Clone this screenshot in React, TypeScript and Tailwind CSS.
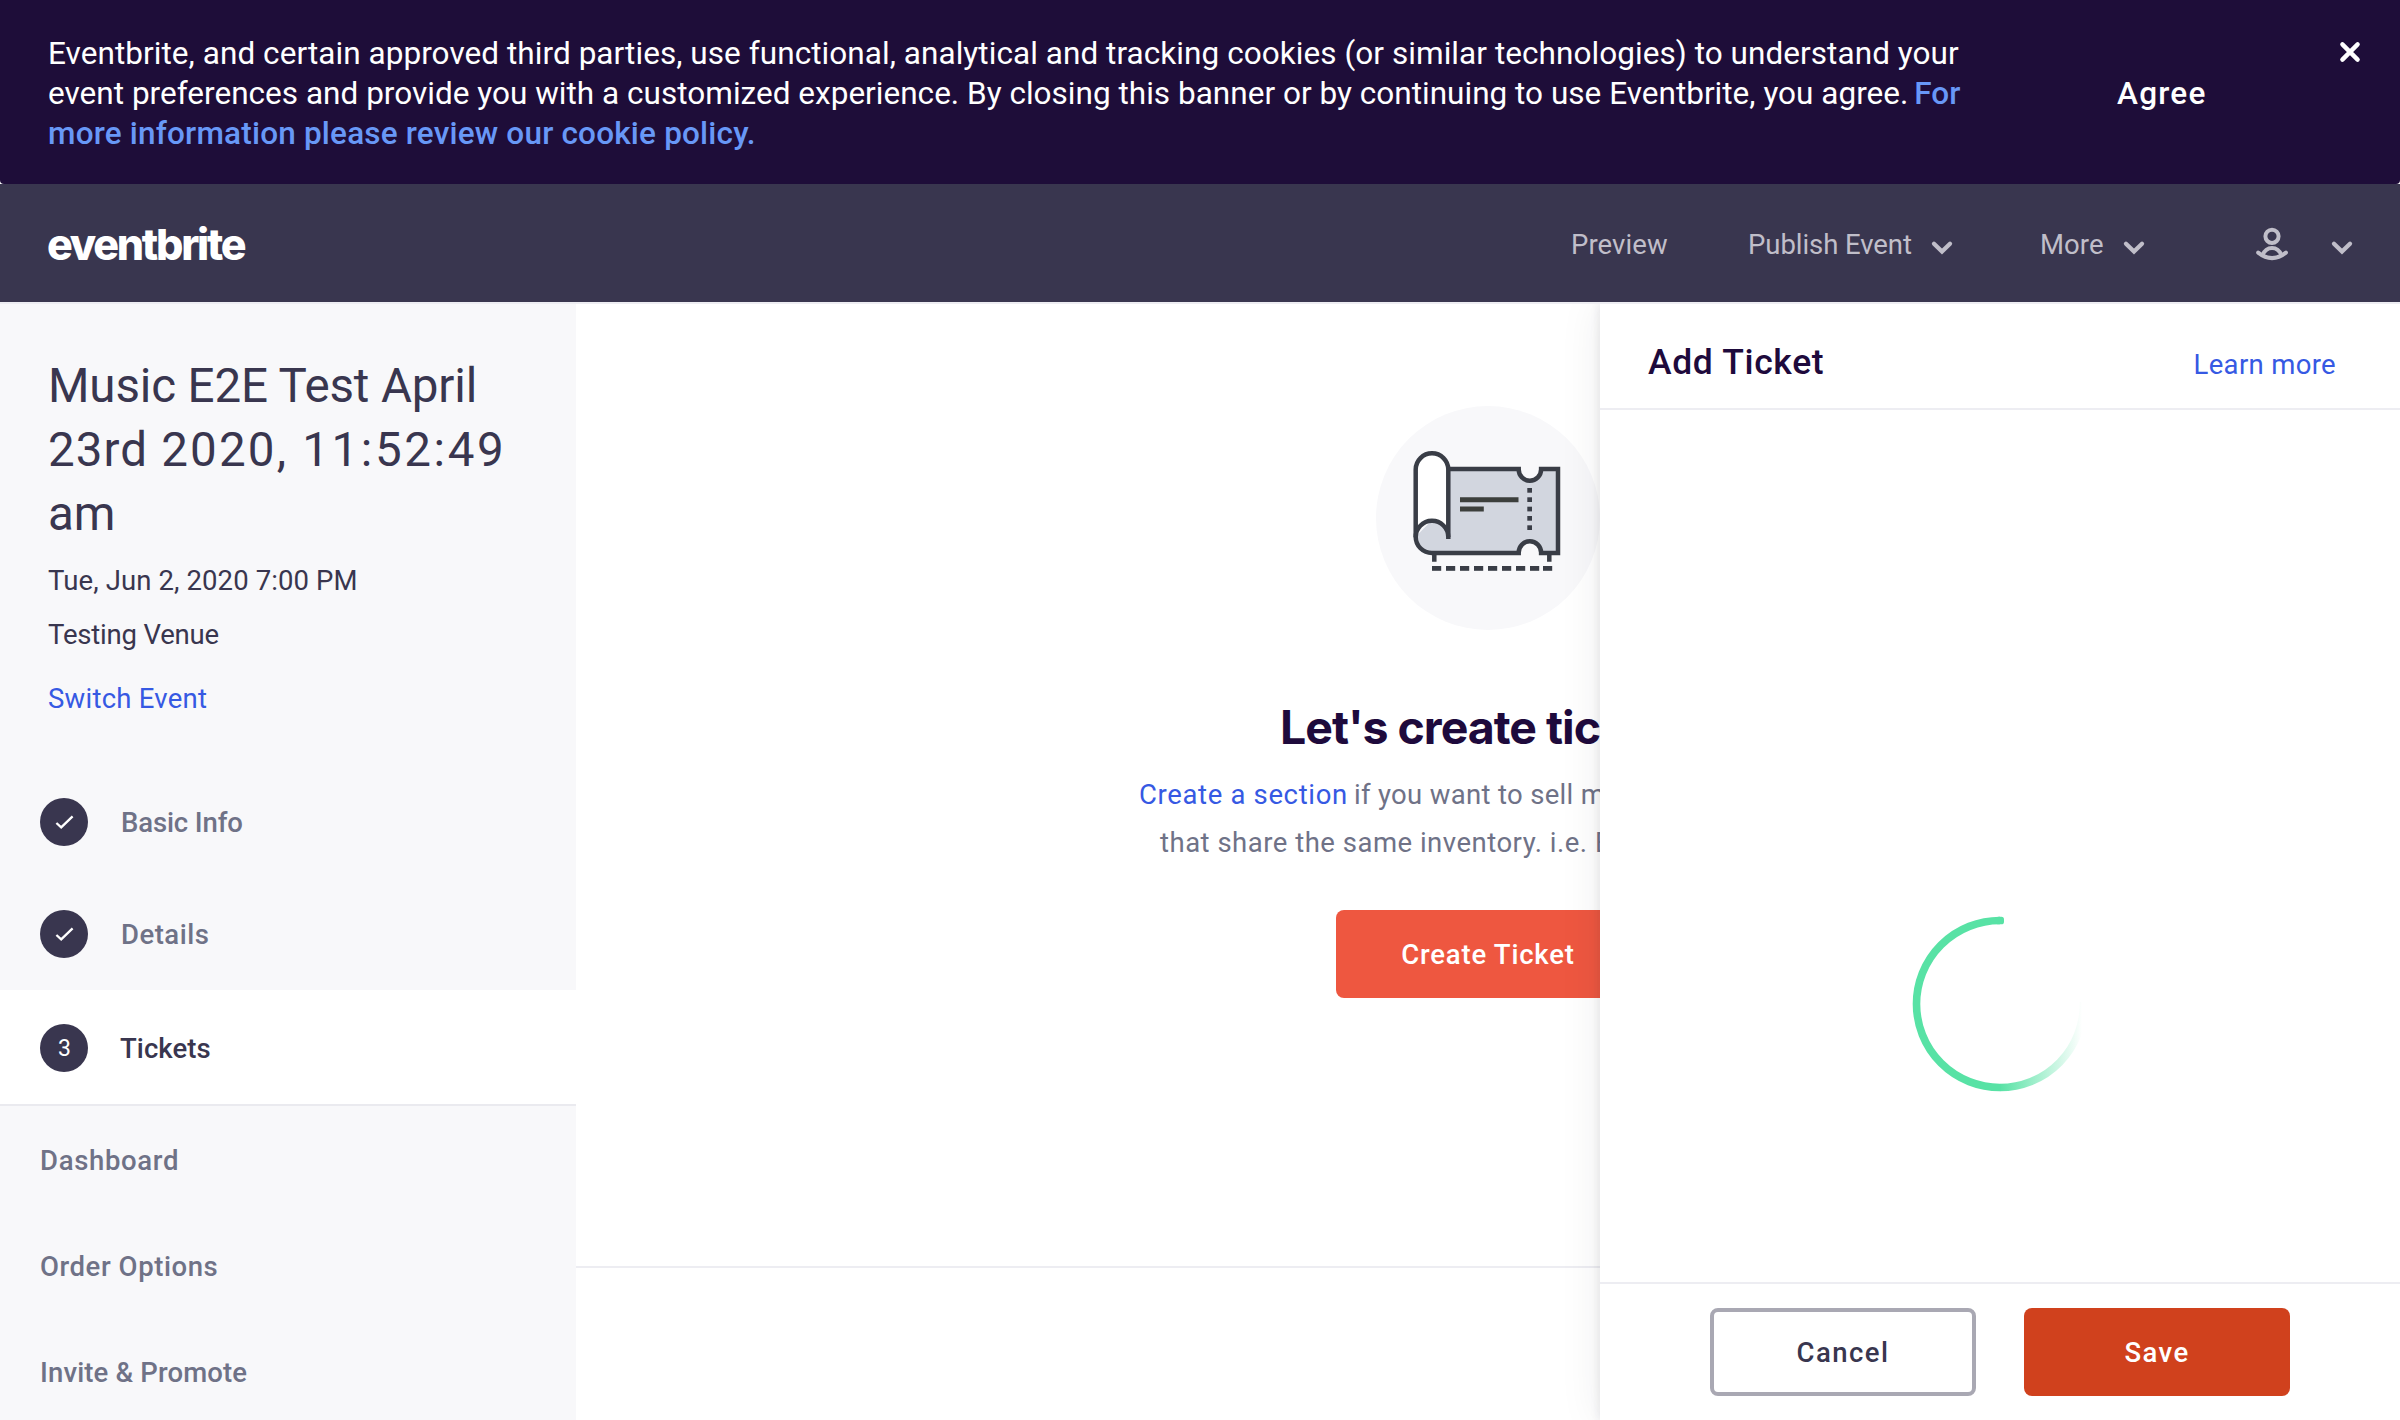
import React from "react";

function Chevron() {
  return (
    <svg className="h-4 w-6 shrink-0" viewBox="0 0 24 16" fill="none" stroke="#c0bec9" strokeWidth="4.3">
      <path d="M4 3.8 12 11.5 20 3.8" strokeLinecap="round" />
    </svg>
  );
}

function UserIcon() {
  return (
    <svg className="size-9 shrink-0" viewBox="0 0 36 36" fill="none" stroke="#c0bec9" strokeWidth="4">
      <circle cx="18" cy="10.3" r="6.6" />
      <path d="M4.2 26.6Q18 37.6 31.9 26.6" strokeLinecap="round" />
      <path d="M8.4 29.5C10.4 24.6 14 22.1 18 22.1S25.6 24.6 27.6 29.5" />
    </svg>
  );
}

function CloseIcon() {
  return (
    <svg className="size-6" viewBox="0 0 24 24" stroke="#fff" strokeWidth="4.4" strokeLinecap="round">
      <path d="M4.4 4.4 19.6 19.6M19.6 4.4 4.4 19.6" />
    </svg>
  );
}

const stubDashes = [56, 70, 84, 98, 112, 126, 140, 154, 167];
const perforation = [82, 91.3, 100.7, 110, 119.3];

function TicketArt() {
  return (
    <svg className="mx-auto block size-56" viewBox="0 0 224 224" fill="none" stroke="#393d46" strokeWidth="4.5">
      <circle cx="112" cy="112" r="112" fill="#f8f8fa" stroke="none" />
      <path
        fill="#d2d6df"
        d="M72 63H142.7V63.5A11.2 11.2 0 0 0 165.1 63.5V63H182V147H165.1V146.5A11.2 11.2 0 0 0 142.7 146.5V147H56A16.3 16.3 0 0 1 39.7 130.7L60 110Z"
        stroke="none"
      />
      <path fill="#fff" stroke="none" d="M39.7 131V63.6A16.3 16.3 0 0 1 72.3 63.6V131A16.3 16.3 0 0 0 39.7 131Z" />
      <path d="M72.3 63H142.7V63.5A11.2 11.2 0 0 0 165.1 63.5V63H182V147H165.1V146.5A11.2 11.2 0 0 0 142.7 146.5V147H56A16.3 16.3 0 0 1 39.7 130.7V63.6A16.3 16.3 0 0 1 72.3 63.6V133" />
      <path d="M39.7 131.3A16.3 16.3 0 0 1 72.3 131" />
      <path stroke="#3c3f3c" strokeWidth="5" d="M84 93.8H142.5M84 103.1H107.8" />
      <path d="M58.3 149V155.7M173.3 149V155.7" />
      <g fill="#393d46" stroke="none">
        {perforation.map((y) => (
          <rect key={y} x="151.3" y={y} width="4.7" height="4.7" />
        ))}
        {stubDashes.map((x) => (
          <rect key={x} x={x} y="160" width="9.2" height="4.8" />
        ))}
      </g>
    </svg>
  );
}

function Spinner() {
  return (
    <svg className="size-[180px]" viewBox="0 0 180 180" fill="none" strokeWidth="7.6">
      <defs>
        <linearGradient id="fade" gradientUnits="userSpaceOnUse" x1="90" y1="0" x2="172" y2="0">
          <stop offset="0" stopColor="#58e2a5" />
          <stop offset="1" stopColor="#58e2a5" stopOpacity="0" />
        </linearGradient>
      </defs>
      <path d="M90 173.5A83.5 83.5 0 0 0 173.5 88" stroke="url(#fade)" />
      <path d="M90.2 173.5H90A83.5 83.5 0 0 1 90 6.5" stroke="#58e2a5" />
      <rect x="86" y="2.7" width="8" height="7.6" rx="2.6" fill="#58e2a5" />
    </svg>
  );
}

function CheckBadge() {
  return (
    <svg className="size-12 shrink-0 rounded-full bg-[#39364f]" viewBox="0 0 48 48" fill="none" stroke="#fff" strokeWidth="2.3">
      <path d="M16.4 25 21.2 29.4 32.6 18.4" />
    </svg>
  );
}

function Banner() {
  return (
    <div className="h-[184px] bg-white">
      <div className="flex h-full rounded-b-[4px] bg-[#1e0d39]">
        <p className="w-[2069px] pt-[34px] pl-12 text-[31.5px] leading-10 whitespace-nowrap text-white">
          <span className="tracking-[0.06px]">
            Eventbrite, and certain approved third parties, use functional, analytical and tracking cookies (or similar technologies) to understand your
          </span>
          <br />
          <span className="tracking-[0.02px]">
            event preferences and provide you with a customized experience. By closing this banner or by continuing to use Eventbrite, you agree.
          </span>
          <a className="font-medium text-[#6898f7]">
            <span className="pl-[6px]">For</span>
            <br />
            <span className="tracking-[0.19px]">more information please review our cookie policy.</span>
          </a>
        </p>
        <button className="w-[269px] pt-[4px] pl-12 text-left text-[31.5px] leading-10 font-medium tracking-[1.26px] text-white">Agree</button>
        <div className="pt-10">
          <CloseIcon />
        </div>
      </div>
    </div>
  );
}

function NavBar() {
  return (
    <header className="flex h-[120px] items-center justify-between border-b-2 border-[#ededf2] bg-[#39364f] pr-[46px] pl-[47px] text-[27.5px] text-[#c0bec9]">
      <span className="pt-[2px] font-['Inter',sans-serif] text-[43px] leading-none font-extrabold tracking-[-2.3px] text-white">eventbrite</span>
      <nav className="flex items-center leading-8">
        <span className="w-[177px] pt-[3px] tracking-[0.1px]">Preview</span>
        <span className="w-[182px] pt-[3px] tracking-[-0.06px]">Publish Event</span>
        <span className="mr-[86px] pt-[10px]">
          <Chevron />
        </span>
        <span className="w-[82px] pt-[3px] tracking-[0.08px]">More</span>
        <span className="mr-[108px] pt-[10px]">
          <Chevron />
        </span>
        <span className="mr-10 pt-px">
          <UserIcon />
        </span>
        <span className="pt-[10px]">
          <Chevron />
        </span>
      </nav>
    </header>
  );
}

function Sidebar() {
  return (
    <aside className="w-[576px] shrink-0 bg-[#f8f8fa] pt-[50px] text-[27.5px] leading-[54px] text-[#39364f]">
      <div className="pl-12">
        <h1 className="text-[47.5px] leading-[64px]">
          <span className="tracking-[-0.14px]">Music E2E Test April</span>
          <br />
          <span className="tracking-[1.1px]">23rd </span>
          <span className="tracking-[2.2px]">2020, </span>
          <span className="tracking-[2.6px]">11:52:49</span>
          <br />
          am
        </h1>
        <p className="mt-2 tracking-[0.11px]">Tue, Jun 2, 2020 7:00 PM</p>
        <p className="tracking-[-0.19px]">Testing Venue</p>
        <a className="mt-[10px] block tracking-[0.25px] text-[#3659e3]">Switch Event</a>
      </div>
      <nav className="mt-10 font-medium text-[#6f7287]">
        <div className="flex h-28 items-center gap-8 pl-10">
          <CheckBadge />
          <span className="pt-[2px] pl-px tracking-[-0.12px]">Basic Info</span>
        </div>
        <div className="flex h-28 items-center gap-8 pl-10">
          <CheckBadge />
          <span className="pt-[2px] pl-px tracking-[0.5px]">Details</span>
        </div>
        <div className="flex h-[116px] items-center gap-8 border-b-2 border-[#eaeaef] bg-white pt-[2px] pl-10 text-[#39364f]">
          <span className="flex size-12 items-center justify-center rounded-full bg-[#39364f] pt-px pl-px text-[23px] font-normal text-white">3</span>
          <span className="pt-[2px] tracking-[0.07px]">Tickets</span>
        </div>
        <div className="pt-[2px] pl-10 leading-[106px]">
          <div className="tracking-[0.68px]">Dashboard</div>
          <div className="tracking-[0.57px]">Order Options</div>
          <div className="tracking-[0.14px]">Invite &amp; Promote</div>
        </div>
      </nav>
    </aside>
  );
}

function EmptyState() {
  return (
    <main className="flex-1">
      <div className="h-[964px] border-b-2 border-[#ededf2] pt-[102px]">
        <TicketArt />
        <div className="mx-auto mt-[65px] w-[698px] whitespace-nowrap">
          <h2 className="pl-[141px] font-['Inter',sans-serif] text-[46.5px] leading-[64px] font-bold tracking-[-1px] text-[#1e0a3c]">
            Let's create tickets
          </h2>
          <p className="mt-3 text-[27.5px] leading-[48px] text-[#6f7287]">
            <a className="tracking-[0.65px] text-[#3659e3]">Create a section</a>
            <span className="-ml-px tracking-[0.32px]"> if you want to sell multiple ticket types</span>
            <br />
            <span className="pl-[21px] tracking-[0.5px]">that share the same inventory. i.e. Early Bird, VIP.</span>
          </p>
        </div>
        <button className="mx-auto mt-[43px] block h-[88px] w-[304px] rounded-lg bg-[#ee5740] pt-[2px] text-[27.5px] font-medium tracking-[0.78px] text-white">
          Create Ticket
        </button>
      </div>
    </main>
  );
}

function TicketPanel() {
  return (
    <section className="absolute inset-y-0 right-0 flex w-[800px] flex-col bg-white shadow-[-2px_0_8px_rgba(40,44,53,0.08),0_0_40px_rgba(40,44,53,0.08)]">
      <div className="flex h-[106px] shrink-0 items-baseline justify-between border-b-2 border-[#ededf2] pt-[34px] pr-16 pl-12 leading-[48px]">
        <h3 className="text-[35.5px] font-medium tracking-[0.65px] text-[#1e0a3c]">Add Ticket</h3>
        <a className="text-[27.5px] tracking-[0.33px] text-[#3659e3]">Learn more</a>
      </div>
      <div className="flex flex-1 justify-center pt-[504px]">
        <Spinner />
      </div>
      <div className="flex h-[138px] shrink-0 gap-12 border-t-2 border-[#ededf2] pt-6 pl-[110px] text-[27.5px] font-medium">
        <button className="h-[88px] w-[266px] rounded-lg border-4 border-[#a9a8b3] pt-[2px] tracking-[1.47px] text-[#39364f]">Cancel</button>
        <button className="h-[88px] w-[266px] rounded-lg bg-[#d0411d] pt-[2px] tracking-[1.42px] text-white">Save</button>
      </div>
    </section>
  );
}

export default function App() {
  return (
    <div className="flex h-[1420px] w-[2400px] flex-col overflow-hidden bg-white font-['Roboto',sans-serif]">
      <Banner />
      <NavBar />
      <div className="relative flex min-h-0 flex-1 overflow-hidden">
        <Sidebar />
        <EmptyState />
        <TicketPanel />
      </div>
    </div>
  );
}
